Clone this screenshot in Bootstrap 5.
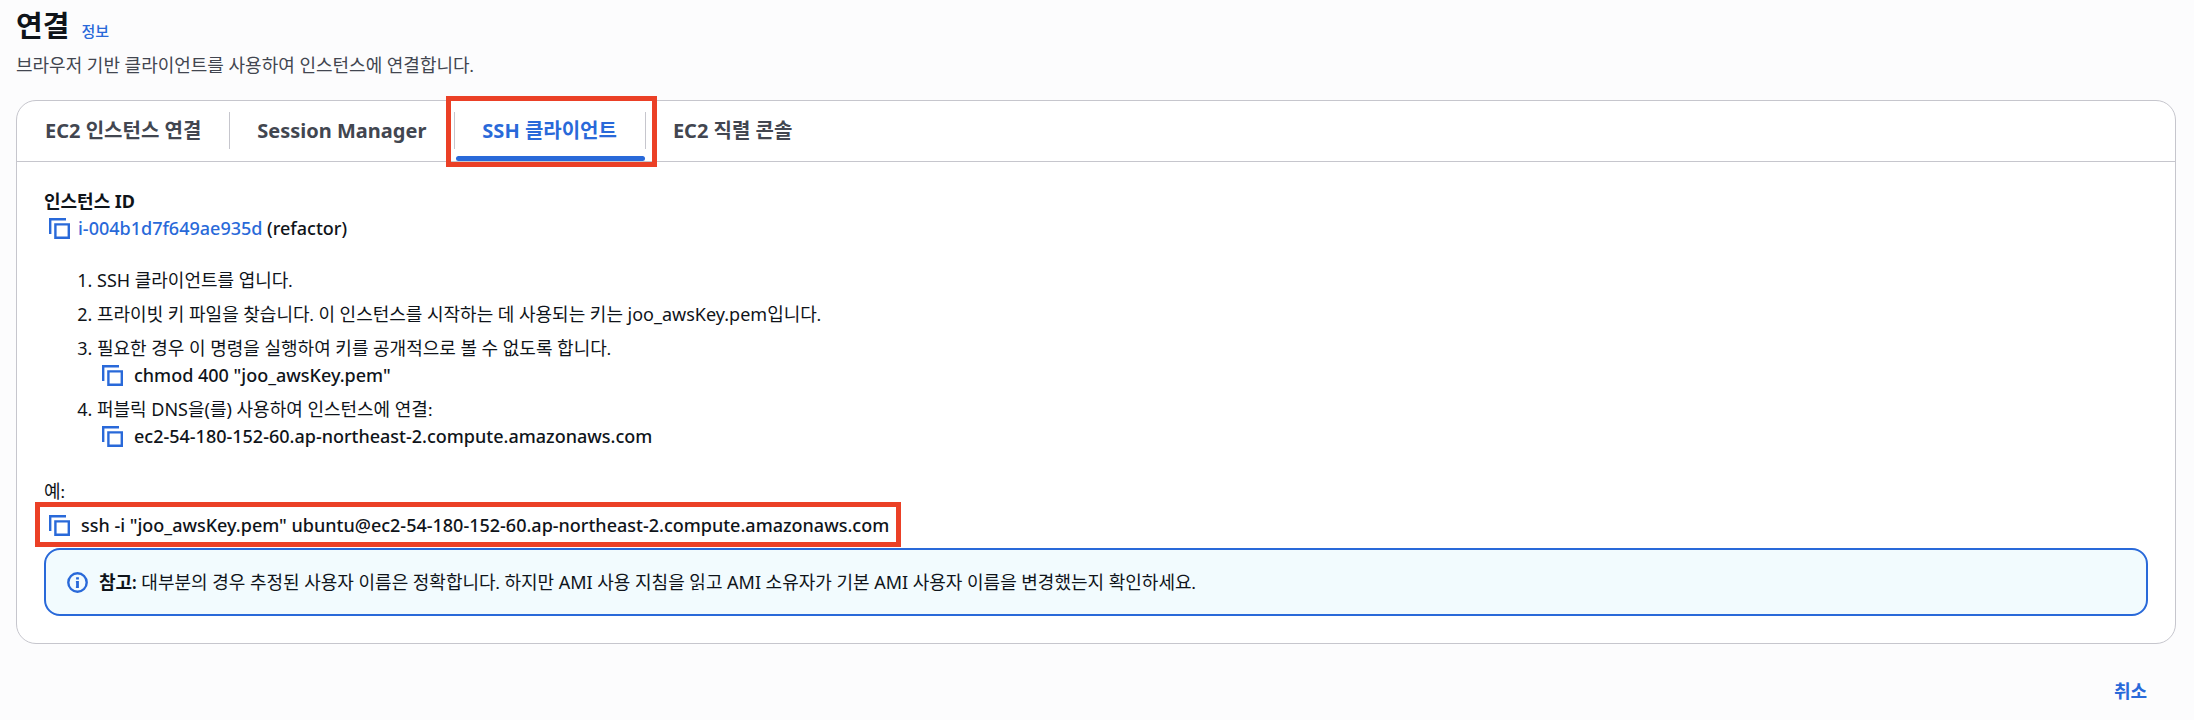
<!DOCTYPE html>
<html lang="ko">
<head>
<meta charset="utf-8">
<meta name="viewport" content="width=device-width, initial-scale=1">
<title>연결</title>
<link rel="stylesheet" href="https://cdn.jsdelivr.net/npm/bootstrap@5.3.0/dist/css/bootstrap.min.css">
<style>
:root{--link:#2969d9;--ink:#0f141a;--muted-ink:#424650;--line:#c6c6cd;--mark-red:#eb4026}
body{background:#fcfcfd;color:var(--ink);font:400 18px/27px "Lato","Noto Sans CJK KR",sans-serif}
a{color:var(--link);text-decoration:none}
.page{padding:4px 18px 12px 16px}
.page-title{font-size:29px;line-height:44px;font-weight:700}
.info-link{font-size:15px;font-weight:500}
.intro{color:var(--muted-ink);margin:4px 0 21px}
.panel{border:1px solid var(--line);border-radius:20px;background:#fff}
.tab-strip{border-bottom:1px solid var(--line)}
.tab-strip .nav-item{position:relative}
.tab-strip .nav-link{color:var(--muted-ink);background:none;font:700 20px/36px "Noto Sans","Noto Sans CJK KR",sans-serif;padding:12px 28px;border:0;border-radius:0}
.tab-strip .nav-link.active{color:var(--link)}
.tab-strip .nav-item + .nav-item::before{content:"";position:absolute;left:0;top:11px;height:37px;border-left:1px solid var(--line)}
.tab-strip .nav-link.active::after{content:"";position:absolute;left:2px;right:0;bottom:0;height:5px;border-radius:3px;background:var(--link)}
.callout-box{position:absolute;border:5px solid var(--mark-red);pointer-events:none;z-index:2}
.tab-callout{inset:-5px -12px -6px -8px}
.cmd-callout{inset:-10px -12px -8px -9px}
.panel-body{padding:26px 27px 27px}
.copy-btn{border:0;background:none;padding:0;color:var(--link);display:flex}
.copy-row{display:flex;align-items:center;gap:11px;padding-left:5px}
.copy-text,.latin{font-family:"Noto Sans","Noto Sans CJK KR",sans-serif}
.copy-text{font-weight:500}
.steps{margin:25px 0 28px;padding-left:53px}
.steps > li{margin-bottom:7px}
.steps > li::marker{font-family:"Noto Sans",sans-serif}
.example{position:relative;width:fit-content;margin:7px 0 9px}
.note{border:2px solid var(--link);border-radius:16px;background:#f2fbfe;padding:18px 21px;min-height:68px;display:flex;align-items:center;gap:11px}
.footer-actions{padding:34px 29px 0 0}
.cancel{color:var(--link);font-size:18px;font-weight:700;border:0;background:none;padding:0}
</style>
</head>
<body>
<svg class="d-none" aria-hidden="true">
  <symbol id="copy" viewBox="0 0 21 21"><path d="M1.2 16V1.2H17M6.4 6.4h13.4v13.4H6.4z" fill="none" stroke="currentColor" stroke-width="2.4"/></symbol>
</svg>
<main class="page">
  <header>
    <div class="d-flex align-items-baseline gap-2">
      <h1 class="page-title mb-0 pe-1">연결</h1>
      <a class="info-link" href="#">정보</a>
    </div>
    <p class="intro">브라우저 기반 클라이언트를 사용하여 인스턴스에 연결합니다.</p>
  </header>
  <section class="panel">
    <ul class="nav tab-strip" role="tablist">
      <li class="nav-item" role="presentation"><button class="nav-link" type="button" role="tab">EC2 인스턴스 연결</button></li>
      <li class="nav-item" role="presentation"><button class="nav-link" type="button" role="tab">Session Manager</button></li>
      <li class="nav-item" role="presentation"><button class="nav-link active" type="button" role="tab" aria-selected="true">SSH 클라이언트</button><span class="callout-box tab-callout"></span></li>
      <li class="nav-item" role="presentation"><button class="nav-link" type="button" role="tab">EC2 직렬 콘솔</button></li>
    </ul>
    <div class="panel-body">
      <div class="fw-bold">인스턴스 <span class="latin">ID</span></div>
      <div class="copy-row gap-2">
        <button class="copy-btn" type="button" aria-label="복사"><svg width="21" height="21"><use href="#copy"/></svg></button>
        <span class="copy-text"><a href="#">i-004b1d7f649ae935d</a> (refactor)</span>
      </div>
      <ol class="steps">
        <li><span class="latin">SSH</span> 클라이언트를 엽니다.</li>
        <li>프라이빗 키 파일을 찾습니다. 이 인스턴스를 시작하는 데 사용되는 키는 <span class="latin">joo_awsKey.pem</span>입니다.</li>
        <li>필요한 경우 이 명령을 실행하여 키를 공개적으로 볼 수 없도록 합니다.
          <div class="copy-row"><button class="copy-btn" type="button" aria-label="복사"><svg width="21" height="21"><use href="#copy"/></svg></button><span class="copy-text">chmod 400 "joo_awsKey.pem"</span></div>
        </li>
        <li>퍼블릭 <span class="latin">DNS을(를)</span> 사용하여 인스턴스에 연결:
          <div class="copy-row"><button class="copy-btn" type="button" aria-label="복사"><svg width="21" height="21"><use href="#copy"/></svg></button><span class="copy-text">ec2-54-180-152-60.ap-northeast-2.compute.amazonaws.com</span></div>
        </li>
      </ol>
      <div>예:</div>
      <div class="example copy-row">
        <button class="copy-btn" type="button" aria-label="복사"><svg width="21" height="21"><use href="#copy"/></svg></button><span class="copy-text">ssh -i "joo_awsKey.pem" ubuntu@ec2-54-180-152-60.ap-northeast-2.compute.amazonaws.com</span>
        <span class="callout-box cmd-callout"></span>
      </div>
      <div class="note" role="note">
        <svg class="flex-shrink-0" width="21" height="21" viewBox="0 0 21 21" fill="none" stroke="#2969d9" stroke-width="2.4"><circle cx="10.5" cy="10.5" r="9.2"/><path d="M10.5 5.2v2.4M10.5 9v7" stroke-width="2.8"/><path d="M8.9 9.7h1.6M8.9 15.3h1.6" stroke-width="1.4"/></svg>
        <div><strong>참고:</strong> 대부분의 경우 추정된 사용자 이름은 정확합니다. 하지만 <span class="latin">AMI</span> 사용 지침을 읽고 <span class="latin">AMI</span> 소유자가 기본 <span class="latin">AMI</span> 사용자 이름을 변경했는지 확인하세요.</div>
      </div>
    </div>
  </section>
  <footer class="footer-actions d-flex justify-content-end">
    <button class="cancel" type="button">취소</button>
  </footer>
</main>
<script src="https://cdn.jsdelivr.net/npm/bootstrap@5.3.0/dist/js/bootstrap.bundle.min.js"></script>
</body>
</html>
